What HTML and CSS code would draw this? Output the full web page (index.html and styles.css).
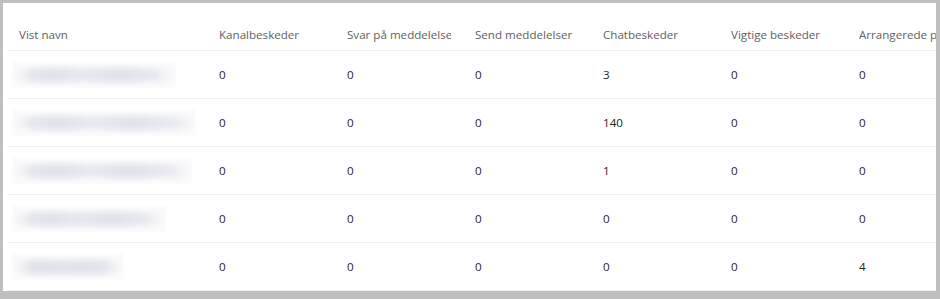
FILE: index.html
```html
<!DOCTYPE html>
<html lang="da">
<head>
<meta charset="utf-8">
<title>Aktivitet</title>
<link rel="stylesheet" href="styles.css">
</head>
<body>
<div class="frame">
  <div class="table">
    <div class="row head">
      <div class="cell name">Vist navn</div>
      <div class="cell">Kanalbeskeder</div>
      <div class="cell">Svar på meddelelser</div>
      <div class="cell">Send meddelelser</div>
      <div class="cell">Chatbeskeder</div>
      <div class="cell">Vigtige beskeder</div>
      <div class="cell">Arrangerede planer</div>
    </div>
    <div class="row">
      <div class="cell name"><span class="blur w1" role="img" aria-label="Sløret navn"></span></div>
      <div class="cell">0</div><div class="cell">0</div><div class="cell">0</div>
      <div class="cell">3</div><div class="cell">0</div><div class="cell">0</div>
    </div>
    <div class="row">
      <div class="cell name"><span class="blur w2" role="img" aria-label="Sløret navn"></span></div>
      <div class="cell">0</div><div class="cell">0</div><div class="cell">0</div>
      <div class="cell">140</div><div class="cell">0</div><div class="cell">0</div>
    </div>
    <div class="row">
      <div class="cell name"><span class="blur w3" role="img" aria-label="Sløret navn"></span></div>
      <div class="cell">0</div><div class="cell">0</div><div class="cell">0</div>
      <div class="cell">1</div><div class="cell">0</div><div class="cell">0</div>
    </div>
    <div class="row">
      <div class="cell name"><span class="blur w4" role="img" aria-label="Sløret navn"></span></div>
      <div class="cell">0</div><div class="cell">0</div><div class="cell">0</div>
      <div class="cell">0</div><div class="cell">0</div><div class="cell">0</div>
    </div>
    <div class="row">
      <div class="cell name"><span class="blur w5" role="img" aria-label="Sløret navn"></span></div>
      <div class="cell">0</div><div class="cell">0</div><div class="cell">0</div>
      <div class="cell">0</div><div class="cell">0</div><div class="cell">4</div>
    </div>
  </div>
</div>
</body>
</html>
```
FILE: styles.css
```css
html, body {
  margin: 0;
  padding: 0;
  background: #bfbfbf;
}
body {
  width: 940px;
  height: 299px;
  overflow: hidden;
  font-family: "Open Sans", "Noto Sans", sans-serif;
  font-size: 11.6px;
  color: #242424;
}
.frame {
  margin: 3px 4px 0 3px;
  height: 288px;
  background: #ffffff;
  overflow: hidden;
}
.table {
  padding-left: 4px;
  width: 1100px;
}
.row {
  display: grid;
  grid-template-columns: 176px repeat(6, 104px);
  column-gap: 24px;
  padding-left: 12px;
  height: 47px;
  border-bottom: 1px solid #f0f0f0;
  align-items: center;
  line-height: 16px;
}
.row.head {
  align-items: end;
  padding-bottom: 7px;
  height: 40px;
  color: #616161;
}
.cell {
  min-width: 0;
  white-space: nowrap;
  overflow: hidden;
  text-overflow: clip;
}
.cell.name {
  overflow: visible;
}
.blur {
  display: block;
  margin-left: -7px;
  height: 26px;
  background:
    linear-gradient(to right, #fbfbfc 0, rgba(251, 251, 252, 0) 20px, rgba(251, 251, 252, 0) calc(100% - 20px), #fbfbfc 100%),
    radial-gradient(ellipse 40px 11px at 25% 50%, rgba(220, 222, 232, 0.7), rgba(220, 222, 232, 0)),
    radial-gradient(ellipse 44px 11px at 65% 50%, rgba(220, 222, 232, 0.7), rgba(220, 222, 232, 0)),
    linear-gradient(to bottom, #fbfbfc 6%, #ecedf2 36%, #e9eaf0 50%, #ecedf2 64%, #fbfbfc 94%);
}
.w1 { width: 164px; }
.w2 { width: 184px; }
.w3 { width: 180px; }
.w4 { width: 154px; }
.w5 { width: 112px; }
```
